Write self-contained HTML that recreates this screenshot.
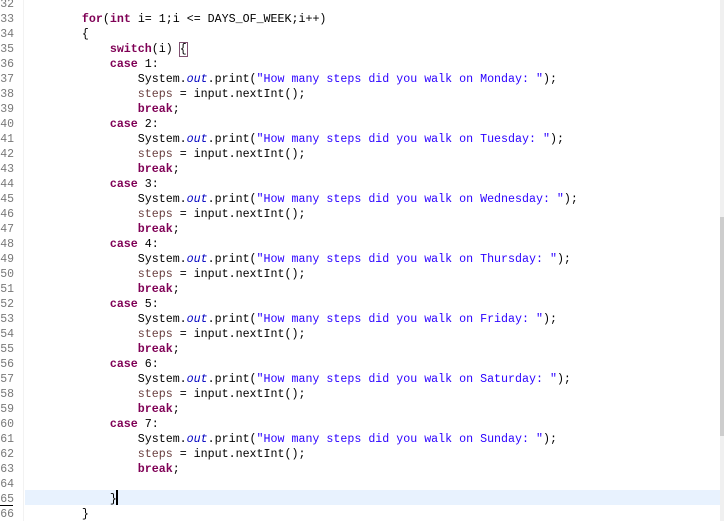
<!DOCTYPE html>
<html><head><style>
html,body{margin:0;padding:0;background:#fff;width:724px;height:521px;overflow:hidden;position:relative}
.g{position:absolute;left:0;top:-3px;width:14px;font:11.5px/15px "Liberation Mono",monospace;color:#787878;text-align:right;white-space:pre}
.sep{position:absolute;left:23px;top:0;width:1px;height:521px;background:#f2f2f2}
.hl{position:absolute;left:25px;top:490px;width:695px;height:15px;background:#e8f2fe}
.c{position:absolute;left:26px;top:-3px;font:11.65px/15px "Liberation Mono",monospace;color:#000;white-space:pre}
.k{color:#7f0055;font-weight:bold}
.s{color:#2a00ff}
.o{color:#0000c0;font-style:italic}
.v{color:#6a3e3e}
.sb{position:absolute;left:720px;top:0;width:4px;height:521px;background:#f0f0f0}
.th{position:absolute;left:720px;top:217px;width:4px;height:219px;background:#cdcdcd}
.box{outline:1px solid #7f5070}
.cur{position:absolute;left:116px;top:490px;width:1.5px;height:15px;background:#000}
.ul{position:absolute;left:0;top:505px;width:13px;height:1px;background:#000}
</style></head><body>
<div class="hl"></div>
<div class="sep"></div>
<div class="g">32
33
34
35
36
37
38
39
40
41
42
43
44
45
46
47
48
49
50
51
52
53
54
55
56
57
58
59
60
61
62
63
64
65
66</div>
<div class="ul"></div>
<div class="c">
        <span class="k">for</span>(<span class="k">int</span> i= 1;i &lt;= DAYS_OF_WEEK;i++)
        {
            <span class="k">switch</span>(i) <span class="box">{</span>
            <span class="k">case</span> 1:
                System.<span class="o">out</span>.print(<span class="s">"How many steps did you walk on Monday: "</span>);
                <span class="v">steps</span> = input.nextInt();
                <span class="k">break</span>;
            <span class="k">case</span> 2:
                System.<span class="o">out</span>.print(<span class="s">"How many steps did you walk on Tuesday: "</span>);
                <span class="v">steps</span> = input.nextInt();
                <span class="k">break</span>;
            <span class="k">case</span> 3:
                System.<span class="o">out</span>.print(<span class="s">"How many steps did you walk on Wednesday: "</span>);
                <span class="v">steps</span> = input.nextInt();
                <span class="k">break</span>;
            <span class="k">case</span> 4:
                System.<span class="o">out</span>.print(<span class="s">"How many steps did you walk on Thursday: "</span>);
                <span class="v">steps</span> = input.nextInt();
                <span class="k">break</span>;
            <span class="k">case</span> 5:
                System.<span class="o">out</span>.print(<span class="s">"How many steps did you walk on Friday: "</span>);
                <span class="v">steps</span> = input.nextInt();
                <span class="k">break</span>;
            <span class="k">case</span> 6:
                System.<span class="o">out</span>.print(<span class="s">"How many steps did you walk on Saturday: "</span>);
                <span class="v">steps</span> = input.nextInt();
                <span class="k">break</span>;
            <span class="k">case</span> 7:
                System.<span class="o">out</span>.print(<span class="s">"How many steps did you walk on Sunday: "</span>);
                <span class="v">steps</span> = input.nextInt();
                <span class="k">break</span>;

            }
        }</div>
<div class="cur"></div>
<div class="sb"></div><div class="th"></div>
</body></html>
